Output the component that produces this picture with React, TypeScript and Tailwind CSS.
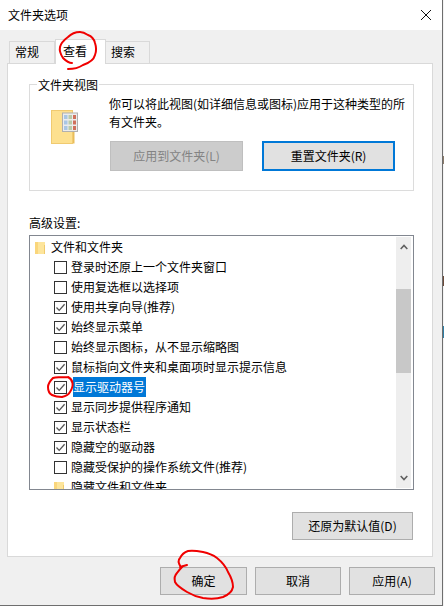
function Check({ checked }: { checked: boolean }) {
  return (
    <span className="w-[13px] h-[13px] shrink-0 border border-[#333333] bg-white flex items-center justify-center">
      {checked && (
        <svg width="11" height="11" viewBox="0 0 11 11" fill="none">
          <path d="M1.5 5.5 L4.2 8.4 L9.6 2.2" stroke="#555555" strokeWidth="1.3" />
        </svg>
      )}
    </span>
  );
}

function SmallFolder() {
  return (
    <svg width="11" height="13" viewBox="0 0 11 13" className="shrink-0">
      <rect x="0" y="1" width="10" height="12" fill="#fde59c" />
      <rect x="0" y="1" width="3" height="12" fill="#fad67c" />
      <rect x="9" y="4" width="1" height="9" fill="#f0ca6c" />
    </svg>
  );
}

function Item({ label, checked, selected }: { label: string; checked: boolean; selected?: boolean }) {
  return (
    <div className="h-5 shrink-0 flex items-center pl-[24px]">
      <Check checked={checked} />
      <span
        className={
          selected
            ? "ml-[6px] h-5 w-[73px] flex items-center bg-[#0078d7] text-white whitespace-nowrap"
            : "ml-[4px] whitespace-nowrap text-black"
        }
      >
        {label}
      </span>
    </div>
  );
}

function Btn({ label, className }: { label: string; className: string }) {
  return (
    <button className={"flex items-center justify-center text-[12px] text-black bg-[#e1e1e1] border-[1px] border-[#adadad] " + className}>
      {label}
    </button>
  );
}

export default function App() {
  const items: [string, boolean][] = [
    ["登录时还原上一个文件夹窗口", false],
    ["使用复选框以选择项", false],
    ["使用共享向导(推荐)", true],
    ["始终显示菜单", true],
    ["始终显示图标，从不显示缩略图", false],
    ["鼠标指向文件夹和桌面项时显示提示信息", true],
  ];
  const after: [string, boolean][] = [
    ["显示同步提供程序通知", true],
    ["显示状态栏", true],
    ["隐藏空的驱动器", true],
    ["隐藏受保护的操作系统文件(推荐)", false],
  ];
  return (
    <div
      className="relative w-[444px] h-[606px] overflow-hidden flex bg-[#f3f3f3] text-[12px] leading-[18px] text-black"
      style={{ fontFamily: '"Noto Sans CJK SC", "Noto Sans", sans-serif' }}
    >
      <div className="w-[443px] h-[606px] shrink-0 flex flex-col bg-[#f0f0f0] border-r border-b border-[#6e6e6e]">
        {/* title bar */}
        <div className="h-[30px] shrink-0 bg-white flex items-center justify-between pl-[8px] pr-[11px]">
          <span className="text-[12px]">文件夹选项</span>
          <svg width="10" height="10" viewBox="0 0 10 10" fill="none">
            <path d="M0 0 L10 10 M10 0 L0 10" stroke="#111111" strokeWidth="1" />
          </svg>
        </div>

        {/* tabs */}
        <div className="h-[33px] shrink-0 flex items-end pl-[9px] relative z-10">
          <div className="w-[46px] h-[22px] pl-[5px] pb-px border border-b-0 border-[#d9d9d9] bg-[#f0f0f0] flex items-center">常规</div>
          <div className="w-[51px] h-[25px] pl-[7px] pb-[2px] -mb-px border border-b-0 border-[#d9d9d9] bg-white flex items-center">查看</div>
          <div className="w-[44px] h-[22px] pl-[5px] pb-px border border-b-0 border-l-0 border-[#d9d9d9] bg-[#f0f0f0] flex items-center">搜索</div>
        </div>

        {/* panel */}
        <div className="ml-[7px] w-[426px] h-[494px] shrink-0 bg-white border border-[#d9d9d9] pl-[21px] pt-[20px] flex flex-col">
          {/* group */}
          <div className="relative w-[385px] h-[107px] shrink-0 border border-[#dcdcdc] pl-[79px] pt-[10px]">
            <span className="absolute left-[7px] -top-[9px] bg-white px-px">文件夹视图</span>
            <svg width="27" height="35" viewBox="0 0 27 35" className="absolute left-[21px] top-[25px]">
              <rect x="0.5" y="0.5" width="21" height="33" fill="#fde08f" stroke="#f0ca70" />
              <path d="M22 33.5 L22 13 L23.5 12 L23.5 33.5 Z" fill="#e9bd5b" />
              <rect x="11.5" y="3" width="15" height="18.5" fill="#ececec" stroke="#b0b0b0" />
              <rect x="13" y="5" width="3.5" height="4" fill="#a9c6e4" />
              <rect x="17.5" y="5" width="3.5" height="4" fill="#b9cba9" />
              <rect x="22" y="5" width="3" height="4" fill="#d0705c" />
              <rect x="13" y="10.5" width="3.5" height="4" fill="#a9c6e4" />
              <rect x="17.5" y="10.5" width="3.5" height="4" fill="#b9cba9" />
              <rect x="22" y="10.5" width="3" height="4" fill="#d0705c" />
              <rect x="13" y="16" width="3.5" height="4" fill="#a9c6e4" />
              <rect x="17.5" y="16" width="3.5" height="4" fill="#b9cba9" />
              <rect x="22" y="16" width="3" height="4" fill="#d0705c" />
            </svg>
            <p className="w-[300px] h-[18px] whitespace-nowrap">你可以将此视图(如详细信息或图标)应用于这种类型的所</p>
            <p className="w-[300px] h-[18px] whitespace-nowrap">有文件夹。</p>
            <div className="flex gap-[19px] mt-[10px] ml-[1px]">
              <div className="w-[133px] h-[30px] flex items-center justify-center bg-[#cccccc] border border-[#bfbfbf] text-[#838383]">应用到文件夹(L)</div>
              <button className="w-[133px] h-[30px] flex items-center justify-center text-[12px] bg-[#e1e1e1] border-2 border-[#0078d7] text-black">重置文件夹(R)</button>
            </div>
          </div>

          <div className="h-[18px] mt-[23px] shrink-0">高级设置:</div>

          {/* list */}
          <div className="mt-[3px] w-[385px] h-[255px] shrink-0 border border-[#828790] flex overflow-hidden">
            <div className="flex-1 min-w-0 flex flex-col pt-px overflow-hidden">
              <div className="h-5 shrink-0 flex items-center pl-[5px] gap-[5px]">
                <SmallFolder />
                <span>文件和文件夹</span>
              </div>
              {items.map(([l, c]) => (
                <Item key={l} label={l} checked={c} />
              ))}
              <Item label="显示驱动器号" checked selected />
              {after.map(([l, c]) => (
                <Item key={l} label={l} checked={c} />
              ))}
              <div className="h-5 shrink-0 flex items-center pl-[24px] gap-[6px]">
                <SmallFolder />
                <span>隐藏文件和文件夹</span>
              </div>
            </div>
            <div className="w-[15px] mr-[2px] my-px shrink-0 bg-[#eeeeee] flex flex-col">
              <div className="h-[52px] shrink-0 flex justify-center pt-[7px]">
                <svg width="8" height="6" viewBox="0 0 8 6" fill="none">
                  <path d="M0.7 5 L4 1.5 L7.3 5" stroke="#606060" strokeWidth="1.6" />
                </svg>
              </div>
              <div className="h-[84px] shrink-0 bg-[#c8c8c8]" />
              <div className="flex-1 flex justify-center items-end pb-[7px]">
                <svg width="8" height="6" viewBox="0 0 8 6" fill="none">
                  <path d="M0.7 1 L4 4.5 L7.3 1" stroke="#606060" strokeWidth="1.6" />
                </svg>
              </div>
            </div>
          </div>

          <div className="mt-[22px] ml-[263px]">
            <Btn label="还原为默认值(D)" className="w-[121px] h-[28px]" />
          </div>
        </div>

        {/* bottom */}
        <div className="flex gap-[8px] mt-[10px] pl-[160px]">
          <Btn label="确定" className="w-[87px] h-[28px]" />
          <Btn label="取消" className="w-[86px] h-[28px]" />
          <Btn label="应用(A)" className="w-[86px] h-[28px]" />
        </div>
      </div>

      {/* background peeking at the right edge */}
      <div className="flex-1 flex flex-col">
        <div className="h-[156px] bg-[#f3f3f3]" />
        <div className="h-[8px] bg-[#8a7a6a]" />
        <div className="h-[112px] bg-[#f3f3f3]" />
        <div className="h-[10px] bg-[#6b4a3a]" />
        <div className="h-[40px] bg-[#f3f3f3]" />
        <div className="h-[12px] bg-[#2f7fa6]" />
      </div>

      {/* red pen marks */}
      <svg width="444" height="606" viewBox="0 0 444 606" fill="none" className="absolute left-0 top-0 z-20 pointer-events-none">
        <path
          d="M68 69 C74 69 80 67 83 65 C89 63 94 59 95 55 C97 50 96 46 95 43 C94 39 91 36 88 35 C85 33 83 32 80 32 C75 32 71 34 68 37 C64 40 61 43 60 47 C59 52 61 55 63 58 C66 61 69 63 72 63"
          stroke="#f00000" strokeWidth="2" strokeLinecap="round"
        />
        <path
          d="M68 377 C62 377 57 377 53 378 C50 381 48 384 48 387 C48 391 50 394 52 395 C56 397 59 397 62 397 C66 396 69 394 70 392 C72 389 73 386 72.5 383 C72 380 70 378 68 377"
          stroke="#f00000" strokeWidth="2" strokeLinecap="round"
        />
        <path
          d="M181 567 C178 563 178 560 180 558 C182 554 185 552 188 551 C193 550 198 551 203 552 C208 553 213 555 217 558 C222 562 226 567 228 572 C231 577 233 582 233 587 C232 592 228 595 223 597 C217 599 210 599 203 598 C197 597 192 595 187 592 C182 589 177 586 175 582 C174 578 175 575 177 573 C179 570 181 568 183 566 M180 567 L187 565"
          stroke="#f00000" strokeWidth="2" strokeLinecap="round"
        />
      </svg>
    </div>
  );
}
